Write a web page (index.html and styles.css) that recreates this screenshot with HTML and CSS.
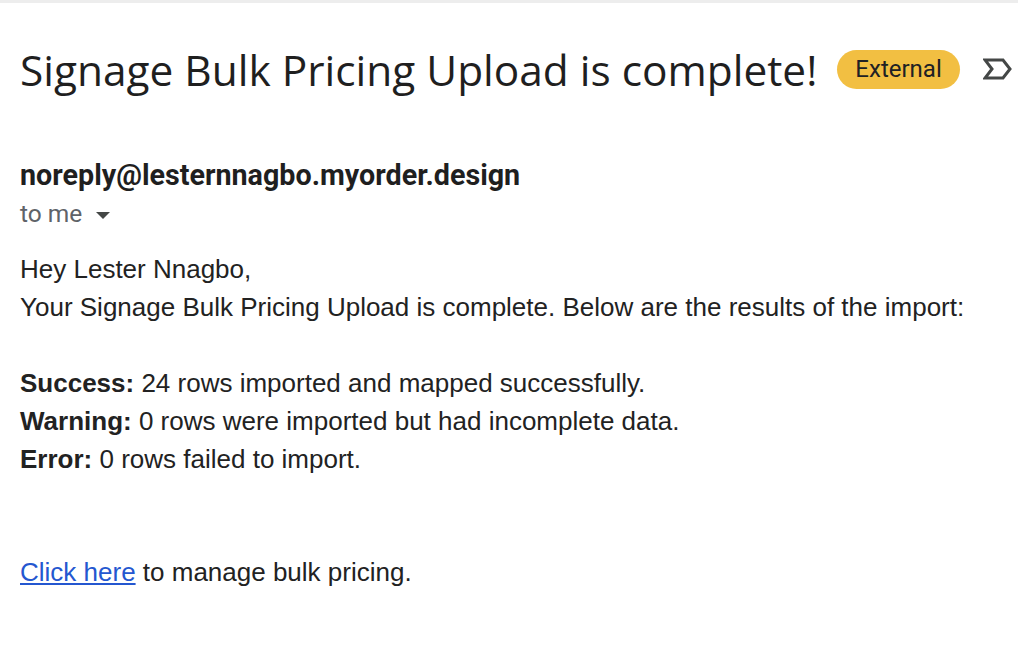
FILE: index.html
```html
<!DOCTYPE html>
<html lang="en">
<head>
  <meta charset="UTF-8" />
  <title>Signage Bulk Pricing Upload is complete!</title>
  <link rel="stylesheet" href="styles.css">
</head>
<body>
  <div class="topbar"></div>

  <div class="mail">
    <div class="subject">
      <h1>Signage Bulk Pricing Upload is complete!</h1>
      <span class="badge">External</span>
      <svg class="label-icon" width="30" height="24" viewBox="0 0 30 24">
        <path d="M2 3 H20 L27 12 L20 21 H2 L9 12 Z" fill="none" stroke="#444746" stroke-width="3" stroke-linejoin="miter"/>
      </svg>
    </div>

    <div class="sender">noreply@lesternnagbo.myorder.design</div>
    <div class="to">to me <span class="caret"></span></div>

    <div class="body">
      Hey Lester Nnagbo,<br>
      Your Signage Bulk Pricing Upload is complete. Below are the results of the import:<br>
      <br>
      <b>Success:</b> 24 rows imported and mapped successfully.<br>
      <b>Warning:</b> 0 rows were imported but had incomplete data.<br>
      <b>Error:</b> 0 rows failed to import.<br>
      <br>
      <br>
      <a href="#">Click here</a> to manage bulk pricing.
    </div>
  </div>
</body>
</html>
```

FILE: styles.css
```css
body {
  margin: 0;
  background: #fff;
  color: #1f1f1f;
  font-family: Roboto, Arial, sans-serif;
}
.topbar {
  height: 3px;
  background: #ededed;
}
.mail {
  padding: 0 0 0 20px;
}
.subject {
  display: flex;
  align-items: center;
  height: 132px;
  white-space: nowrap;
}
h1 {
  margin: 0;
  font-family: "Open Sans", sans-serif;
  font-weight: 400;
  font-size: 42.4px;
  color: #1f1f1f;
}
.badge {
  margin-left: 20px;
  background: #f2bf42;
  color: #202124;
  font-size: 24px;
  padding: 6px 18px;
  border-radius: 20px;
  line-height: 27px;
}
.label-icon {
  margin-left: 23px;
  flex: none;
}
.sender {
  margin-top: 23px;
  font-weight: 700;
  font-size: 28.7px;
  color: #1f1f1f;
}
.to {
  margin-top: 7px;
  font-size: 24.5px;
  color: #5f6368;
}
.caret {
  display: inline-block;
  margin-left: 8px;
  border-left: 7px solid transparent;
  border-right: 7px solid transparent;
  border-top: 7px solid #444746;
  vertical-align: middle;
}
.body {
  margin-top: 23px;
  font-family: "Liberation Sans", Arial, sans-serif;
  font-size: 26px;
  line-height: 37.9px;
  color: #222;
}
.body a {
  color: #2457d0;
}
```
